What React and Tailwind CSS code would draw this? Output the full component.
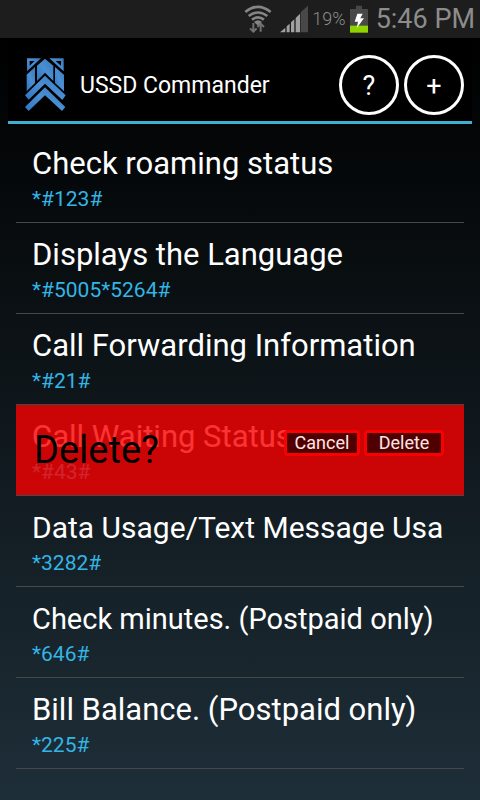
import React, { useState } from "react";
import clsx from "clsx";

const initialCodes = [
  { name: "Check roaming status", code: "*#123#" },
  { name: "Displays the Language", code: "*#5005*5264#" },
  { name: "Call Forwarding Information", code: "*#21#" },
  { name: "Call Waiting Status", code: "*#43#" },
  { name: "Data Usage/Text Message Usa", code: "*3282#", size: "text-[30px]" },
  {
    name: "Check minutes. (Postpaid only)",
    code: "*646#",
    size: "text-[29px]",
  },
  { name: "Bill Balance. (Postpaid only)", code: "*225#" },
];

const WifiIcon = () => (
  <svg width="28" height="28" viewBox="0 0 84 84" fill="none">
    <g stroke="#858585" strokeWidth="8">
      <path d="M4 21 Q42 -10 80 21" />
      <path d="M14 33 Q42 12 70 33" />
      <path d="M24 44 Q42 30 60 44" />
    </g>
    <path d="M30 51 Q42 41 54 51 L42 62 Z" fill="#858585" />
    <g stroke="#707070" strokeWidth="6">
      <path d="M28 54 V80 M18 70 L28 80 L38 70" />
      <path d="M50 80 V56 M40 66 L50 56 L60 66" />
    </g>
  </svg>
);

const SignalIcon = () => (
  <svg width="28" height="28" viewBox="0 0 84 84">
    <path d="M62 22 L84 2 V82 H62 Z" fill="#484848" />
    <g fill="#a0a0a0">
      <path d="M0 82 L16 68 V82 Z" />
      <path d="M20 64 L29 56 V82 H20 Z" />
      <path d="M33 52 L43 43 V82 H33 Z" />
      <path d="M47 39 L60 26 V82 H47 Z" />
    </g>
  </svg>
);

const BatteryIcon = () => (
  <svg width="18" height="28" viewBox="0 0 54 84">
    <path d="M18 2 H36 V12 H54 V63 H0 V12 H18 Z" fill="#484848" />
    <rect y="62" width="54" height="21" fill="#8fd400" />
    <path d="M22 26 L38 26 L31 40 L42 40 L20 70 L24 50 L14 50 Z" fill="#fff" />
  </svg>
);

const Logo = () => (
  <svg width="43" height="55" viewBox="72 54 129 165">
    <defs>
      <linearGradient id="logoBlue" x1="0" y1="1" x2="1" y2="0">
        <stop offset="0" stopColor="#2d76c4" />
        <stop offset="0.5" stopColor="#4a8fd4" />
        <stop offset="1" stopColor="#3878b8" />
      </linearGradient>
    </defs>
    <g fill="url(#logoBlue)">
      {/* corner triangles */}
      <path
        fillRule="evenodd"
        d="M81 58 H123 L81 97 Z M89 66 V80 L104 66 Z"
      />
      <path
        fillRule="evenodd"
        d="M148 58 H191 V97 Z M167 66 L183 80 V66 Z"
      />
      {/* feather */}
      <path d="M80 107 L105 84 V132 L80 157 Z" />
      <path d="M192 107 L165 84 V132 L192 157 Z" />
      <path d="M111 80 L135 59 L160 80 V126 L135 101 L111 126 Z" />
      {/* chevrons */}
      <path d="M75 169 L135 110 L197 169 L187 183 L135 134 L86 182 Z" />
      <path d="M75 204 L135 145 L196 204 L186 216 L135 169 L86 216 Z" />
    </g>
  </svg>
);

const StatusBar = () => (
  <div className="flex h-[38px] items-center justify-end bg-[#1d1d1d] pr-[5px] text-[#8c8c8c]">
    <WifiIcon />
    <span className="ml-2 flex">
      <SignalIcon />
    </span>
    <span className="ml-1 text-lg font-light">19%</span>
    <span className="mr-2 ml-1 flex">
      <BatteryIcon />
    </span>
    <span className="text-[27px] leading-none">5:46 PM</span>
  </div>
);

const RoundButton = ({ label, children }) => (
  <button
    type="button"
    aria-label={label}
    className="h-[60px] w-[60px] shrink-0 rounded-full border-3 border-white pt-1 text-[27px] leading-none text-white"
  >
    {children}
  </button>
);

const DeleteOverlay = ({ onCancel, onDelete }) => (
  <div className="absolute inset-0 flex items-center justify-between bg-[#fa0000]/80 pr-5 pl-[18px]">
    <span className="text-[38px] leading-none text-black">Delete?</span>
    <div className="flex gap-1 pb-[14px]">
      <button
        type="button"
        onClick={onCancel}
        className="h-[26px] w-[76px] rounded-sm border-3 border-[#fa0000] bg-[#500000] text-lg leading-none text-[#ffe6e6]"
      >
        Cancel
      </button>
      <button
        type="button"
        onClick={onDelete}
        className="h-[26px] w-[80px] rounded-sm border-3 border-[#fa0000] bg-[#500000] text-lg leading-none text-[#ffe6e6]"
      >
        Delete
      </button>
    </div>
  </div>
);

const App = () => {
  const [codes, setCodes] = useState(initialCodes);
  const [pending, setPending] = useState("*#43#");

  const handleDelete = () => {
    setCodes(codes.filter((item) => item.code !== pending));
    setPending(null);
  };

  return (
    <div className="flex min-h-screen flex-col bg-black font-['Roboto','Liberation_Sans',sans-serif]">
      <StatusBar />
      <div className="flex-1 bg-linear-to-b/srgb from-black to-[#1e2e38]">
        <header className="mx-2 flex h-[86px] items-center border-b-3 border-[#3fb0d2] bg-black pt-[10px] pr-2 pl-4">
          <Logo />
          <h1 className="ml-[13px] flex-1 pt-1 text-[23px] text-white">
            USSD Commander
          </h1>
          <div className="flex gap-[5px]">
            <RoundButton label="Help">?</RoundButton>
            <RoundButton label="Add code">+</RoundButton>
          </div>
        </header>

        <ul className="px-4 pt-2">
          {codes.map((item) => (
            <li
              key={item.code}
              className="relative h-[91px] border-b border-[#46494b] px-4 pt-3"
            >
              <p
                className={clsx(
                  "overflow-hidden leading-10 whitespace-nowrap text-white",
                  item.size || "text-[31px]"
                )}
              >
                {item.name}
              </p>
              <p className="text-[21px] leading-[30px] text-[#33b5e5]">
                {item.code}
              </p>
              {item.code === pending && (
                <DeleteOverlay
                  onCancel={() => setPending(null)}
                  onDelete={handleDelete}
                />
              )}
            </li>
          ))}
        </ul>
      </div>
    </div>
  );
};

export default App;
